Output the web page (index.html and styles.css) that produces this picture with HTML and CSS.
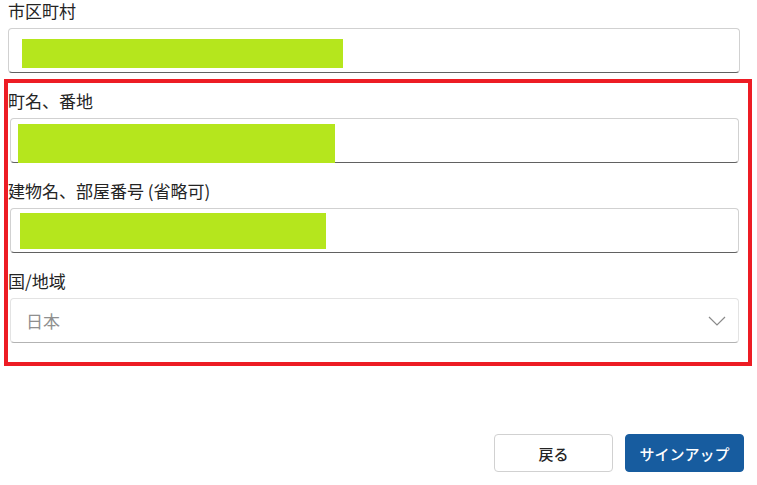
FILE: index.html
```html
<!DOCTYPE html>
<html lang="ja">
<head>
<meta charset="utf-8">
<link rel="stylesheet" href="styles.css">
</head>
<body>
<div class="page">
  <div class="field field-top">
    <div class="label">市区町村</div>
    <div class="input"><span class="redact redact-1"></span></div>
  </div>
  <div class="highlight">
    <div class="field">
      <div class="label">町名、番地</div>
      <div class="input"><span class="redact redact-2"></span></div>
    </div>
    <div class="field">
      <div class="label">建物名、部屋番号 (省略可)</div>
      <div class="input"><span class="redact redact-3"></span></div>
    </div>
    <div class="field">
      <div class="label">国/地域</div>
      <div class="select">
        <span class="select-value">日本</span>
        <svg class="chevron" width="18" height="10" viewBox="0 0 18 10"><path d="M1 1 L9 9 L17 1" fill="none" stroke="#8a8a8a" stroke-width="1.2"/></svg>
      </div>
    </div>
  </div>
  <div class="actions">
    <button class="btn btn-secondary">戻る</button>
    <button class="btn btn-primary">サインアップ</button>
  </div>
</div>
</body>
</html>
```
FILE: styles.css
```css
* { box-sizing: border-box; }
html, body { margin: 0; padding: 0; background: #fff; }
body {
  font-family: "Noto Sans CJK JP", "Noto Sans", sans-serif;
  color: #242424;
  width: 757px;
  height: 485px;
  overflow: hidden;
}
.page {
  display: flex;
  flex-direction: column;
}
.field-top {
  padding-left: 8px;
  width: 740px;
}
.label {
  font-size: 17px;
  line-height: 22px;
  height: 22px;
  margin-bottom: 6px;
  white-space: nowrap;
}
.input {
  position: relative;
  height: 45px;
  background: #fff;
  border: 1px solid #d1d1d1;
  border-bottom-color: #616161;
  border-radius: 4px;
}
.redact {
  position: absolute;
  background: #b5e61d;
}
.redact-1 { left: 13px; top: 10px; width: 321px; height: 29px; }
.redact-2 { left: 7px; top: 5px; width: 317px; height: 39px; }
.redact-3 { left: 9px; top: 4px; width: 306px; height: 36px; }
.highlight {
  margin-top: 6px;
  margin-left: 4px;
  width: 748px;
  border: 4px solid #ed1c24;
  padding: 7px 9px 19px 0;
  display: flex;
  flex-direction: column;
  gap: 17px;
}
.highlight .input, .highlight .select { margin-left: 2px; }
.select {
  height: 45px;
  border: 1px solid #e3e3e3;
  border-bottom-color: #b3b3b3;
  border-radius: 4px;
  display: flex;
  align-items: center;
  justify-content: space-between;
  padding: 0 12px 0 15px;
}
.select-value {
  font-size: 17px;
  color: #8f8f8f;
}
.chevron { display: block; }
.actions {
  margin-top: 68px;
  display: flex;
  justify-content: flex-end;
  gap: 12px;
  padding-right: 13px;
}
.btn {
  width: 119px;
  height: 38px;
  border-radius: 4px;
  font-family: "Noto Sans CJK JP", sans-serif;
  font-size: 15px;
  font-weight: 500;
  padding: 0;
  cursor: pointer;
}
.btn-secondary {
  background: #fff;
  color: #242424;
  border: 1px solid #d1d1d1;
}
.btn-primary {
  background: #175c9f;
  color: #fff;
  border: 1px solid #175c9f;
}
```
